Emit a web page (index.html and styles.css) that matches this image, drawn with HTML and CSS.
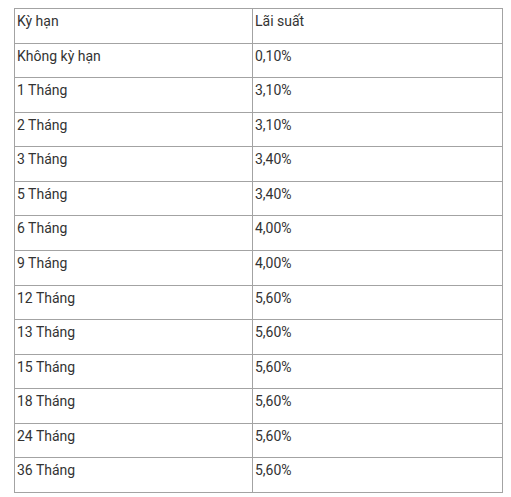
FILE: index.html
```html
<!DOCTYPE html>
<html lang="vi">
<head>
<meta charset="utf-8">
<title>Lãi suất</title>
<link rel="stylesheet" href="styles.css">
</head>
<body>
<table class="rates">
  <tbody>
    <tr><td class="term">Kỳ hạn</td><td>Lãi suất</td></tr>
    <tr><td class="term">Không kỳ hạn</td><td>0,10%</td></tr>
    <tr><td class="term">1 Tháng</td><td>3,10%</td></tr>
    <tr><td class="term">2 Tháng</td><td>3,10%</td></tr>
    <tr><td class="term">3 Tháng</td><td>3,40%</td></tr>
    <tr><td class="term">5 Tháng</td><td>3,40%</td></tr>
    <tr><td class="term">6 Tháng</td><td>4,00%</td></tr>
    <tr><td class="term">9 Tháng</td><td>4,00%</td></tr>
    <tr><td class="term">12 Tháng</td><td>5,60%</td></tr>
    <tr><td class="term">13 Tháng</td><td>5,60%</td></tr>
    <tr><td class="term">15 Tháng</td><td>5,60%</td></tr>
    <tr><td class="term">18 Tháng</td><td>5,60%</td></tr>
    <tr><td class="term">24 Tháng</td><td>5,60%</td></tr>
    <tr><td class="term">36 Tháng</td><td>5,60%</td></tr>
  </tbody>
</table>
</body>
</html>
```
FILE: styles.css
```css
html, body {
  background: #ffffff;
}
body {
  margin: 8px 8px 0 14px;
  font-family: Roboto, "Liberation Sans", Arial, sans-serif;
  font-size: 14px;
  color: #333333;
}
.rates {
  border-collapse: collapse;
  width: 489px;
  table-layout: fixed;
}
.rates tr {
  height: 34.57px;
}
.rates td {
  border: 1px solid #a3a3a3;
  padding: 2px 2px 0 2px;
  vertical-align: top;
  line-height: 20px;
}
.rates td.term {
  width: 233px;
}
```
